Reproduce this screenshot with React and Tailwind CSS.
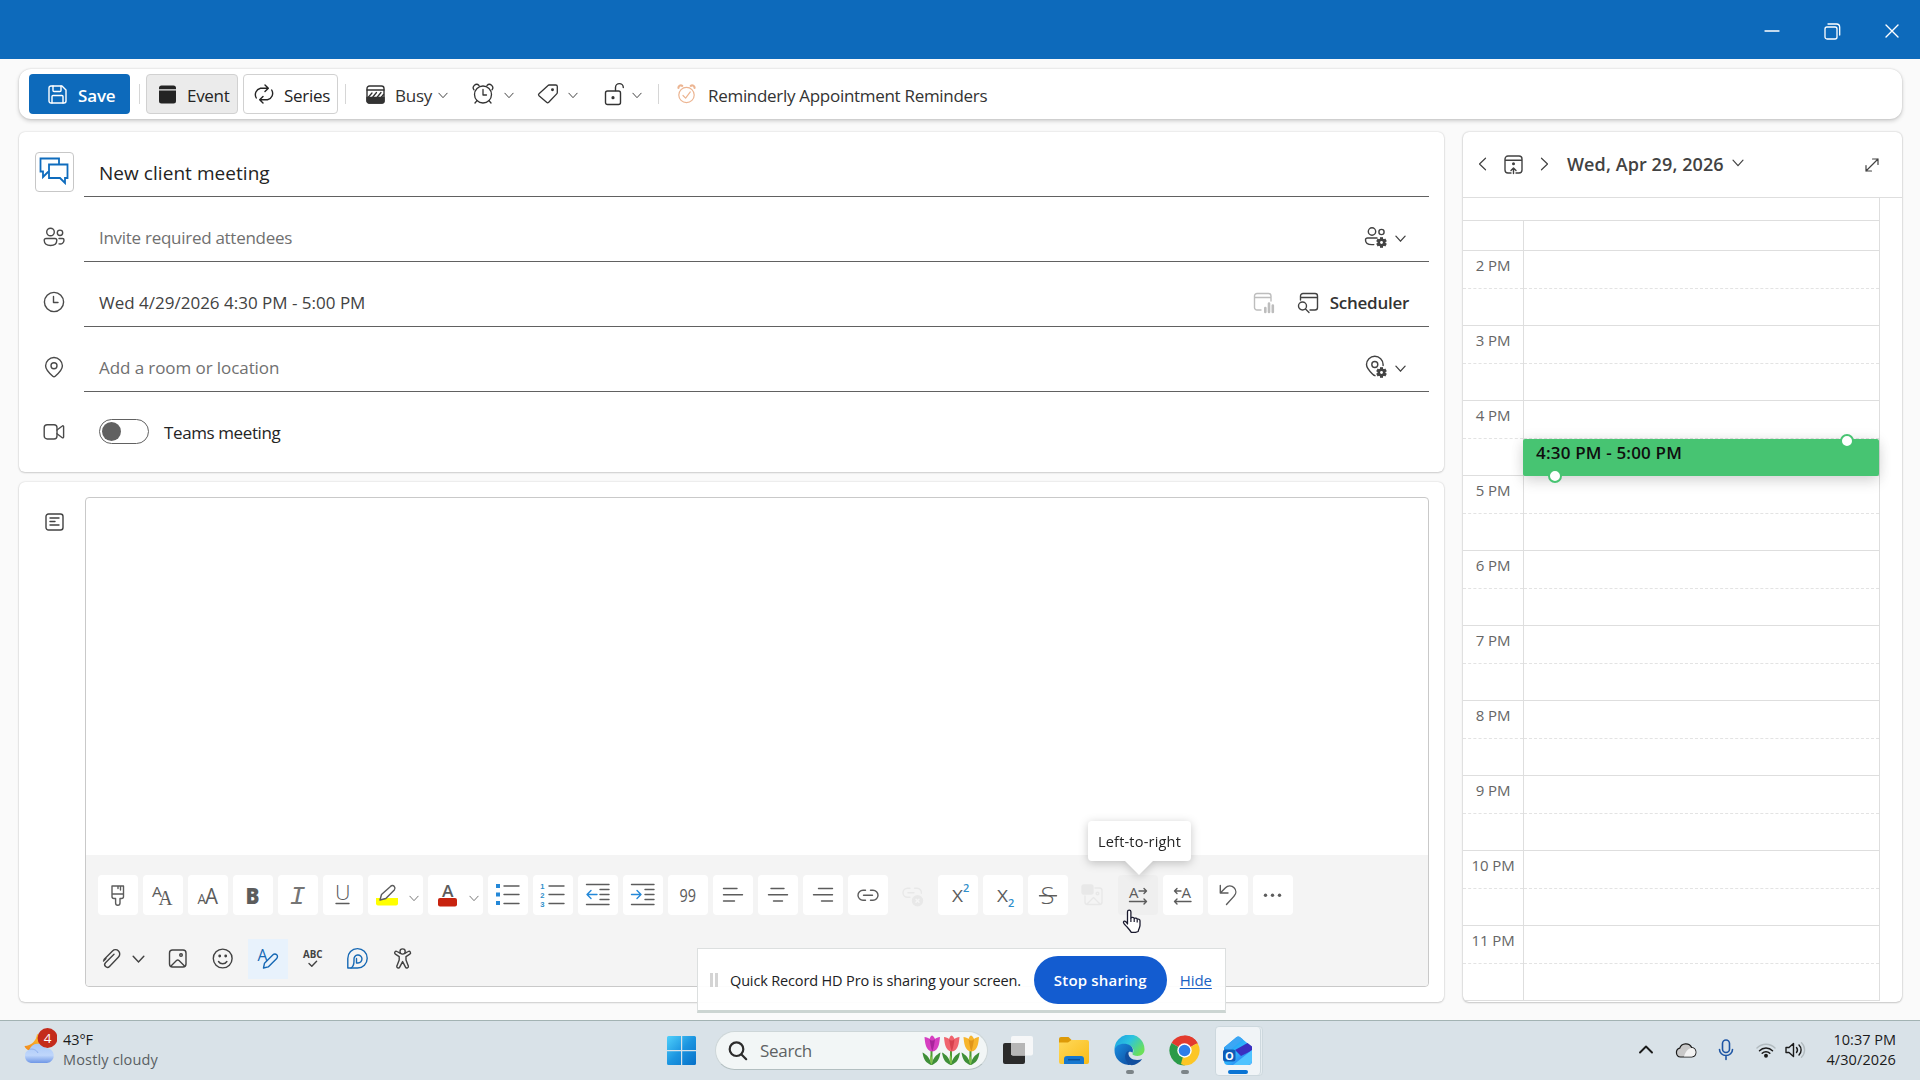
import React, { useState } from 'react';
import clsx from 'clsx';

const Svg = ({ w = 40, h = 40, sw = 1.4, className, children }) => (
  <svg width={w} height={h} viewBox={`0 0 ${w} ${h}`} fill="none" stroke="currentColor" strokeWidth={sw} strokeLinecap="round" strokeLinejoin="round" className={clsx('shrink-0', className)}>
    {children}
  </svg>
);

const Letter = ({ x, y, size, len, weight = 400, family = 'Open Sans, sans-serif', fill = 'currentColor', italic, children }) => (
  <text x={x} y={y} fontSize={size} textLength={len} lengthAdjust="spacingAndGlyphs" fontWeight={weight} fontFamily={family} fontStyle={italic ? 'italic' : 'normal'} fill={fill} stroke="none">
    {children}
  </text>
);

const Chevron = ({ w = 10, sw = 1.4, className }) => (
  <svg width={w} height={w / 2 + 2} viewBox="0 0 12 8" fill="none" stroke="currentColor" strokeWidth={sw} strokeLinecap="round" className={clsx('shrink-0', className)}>
    <path d="M1 1.2 6 6.6 11 1.2" />
  </svg>
);

const Divider = ({ className }) => <div className={clsx('h-5 w-px bg-[#d6d6d6]', className)} />;

/* ---------- title bar ---------- */

const TitleBar = () => (
  <div className="flex h-[59px] items-center justify-end bg-[#0d6abb] pt-[3px] pr-[21px] text-white">
    <Svg w={16} h={16} sw={1.3}><path d="M1 8h14" /></Svg>
    <Svg w={17} h={17} sw={1.3} className="ml-[44px]">
      <rect x="1" y="4" width="12" height="12" rx="2" />
      <path d="M4 1h8.5a3.2 3.2 0 0 1 3.200 3.200V12" />
    </Svg>
    <Svg w={14} h={14} sw={1.4} className="ml-[44px]"><path d="m1 1 12 12M13 1 1 13" /></Svg>
  </div>
);

/* ---------- command bar ---------- */

const CommandBar = ({ mode, setMode }) => (
  <div className="mx-[19px] mt-[10px] flex h-[50px] w-[1883px] items-center rounded-xl bg-white pl-[10px] text-[17px] text-[#333] shadow-[0_0_2px_rgba(0,0,0,0.16),0_2px_4px_rgba(0,0,0,0.18)]">
    <button className="flex h-10 w-[101px] items-center rounded bg-[#0d6abb] pl-[19px] font-semibold tracking-[-0.15px] text-white">
      <Svg w={19} h={19}>
        <path d="M3 1h11l4 4v11a2 2 0 0 1-2 2H3a2 2 0 0 1-2-2V3a2 2 0 0 1 2-2Z" />
        <path d="M5 1v4.500a1 1 0 0 0 1 1h6a1 1 0 0 0 1-1V1M4 18v-6.500a1 1 0 0 1 1-1h9a1 1 0 0 1 1 1V18" />
      </Svg>
      <span className="ml-[11px] pt-[3px]">Save</span>
    </button>
    <Divider className="ml-[9px]" />
    <button onClick={() => setMode('event')} className={clsx('ml-[6px] flex h-10 w-[92px] items-center rounded border border-[#d1d1d1] pl-[11px] tracking-[-0.3px] text-[#242424]', mode === 'event' && 'bg-[#ebebeb]')}>
      <Svg w={19} h={19}>
        <path d="M1 4.200V3a2.500 2.500 0 0 1 2.500-2.500h12A2.500 2.500 0 0 1 18 3v1.200ZM1 5.500h17V16a2.500 2.500 0 0 1-2.500 2.500h-12A2.500 2.500 0 0 1 1 16Z" fill="#242424" stroke="none" />
      </Svg>
      <span className="ml-[10px] pt-[3px]">Event</span>
    </button>
    <button onClick={() => setMode('series')} className={clsx('ml-[5px] flex h-10 w-[95px] items-center rounded border border-[#d1d1d1] pl-[9px] tracking-[-0.3px] text-[#242424]', mode === 'series' && 'bg-[#ebebeb]')}>
      <Svg w={22} h={20}>
        <path d="M3.300 14A6.500 6.500 0 0 1 7.500 4.300H15M12 1l3.300 3.300L12 7.600M18.700 6a6.500 6.500 0 0 1-4.200 9.700H7M10 12.400l-3.300 3.300L10 19" />
      </Svg>
      <span className="ml-[9px] pt-[3px]">Series</span>
    </button>
    <Divider className="ml-[7px]" />
    <Svg w={19} h={19} className="ml-[20px]">
      <rect x="1" y="1" width="17" height="17" rx="2.500" />
      <path d="M1 5h17" />
      <path d="M1 12.500h17v3.500a2 2 0 0 1-2 2H3a2 2 0 0 1-2-2Z" fill="currentColor" />
      <path d="m2.500 12 3.500-4M6.800 12l3.700-4.500M11.300 12 15 7.500M15.500 12l2-2.500" strokeWidth="1.300" />
    </Svg>
    <span className="ml-[10px] w-[44px] pt-[3px] tracking-[-0.26px]">Busy</span>
    <Chevron sw={1.1} className="mt-[3px] ml-[-1px]" />
    <Svg w={22} h={22} sw={1.3} className="ml-[24px]">
      <circle cx="11" cy="11.500" r="8.500" />
      <path d="M11 6.500v5.500h3.500M4.800 17.800 3 20M17.200 17.800 19 20M2 6.800A3.300 3.300 0 0 1 7 2.500M20 6.800a3.300 3.300 0 0 0-5-4.300" />
    </Svg>
    <Chevron sw={1.1} className="mt-[3px] ml-[10px]" />
    <Svg w={22} h={22} sw={1.3} className="ml-[23px]">
      <path d="M12.500 2h6.300a1.500 1.500 0 0 1 1.500 1.500v6a2 2 0 0 1-.6 1.400l-8 8.400a1.500 1.500 0 0 1-2.100 0L2 12.800a1.500 1.500 0 0 1 0-2.100l8.800-8a2 2 0 0 1 1.700-.7Z" />
      <circle cx="15.500" cy="6.700" r=".8" fill="currentColor" />
    </Svg>
    <Chevron sw={1.1} className="mt-[3px] ml-[9px]" />
    <Svg w={20} h={24} sw={1.4} className="ml-[26px]">
      <rect x="1.500" y="9" width="15" height="13.500" rx="2" />
      <path d="M11.500 8.500V5.500a3.900 3.900 0 0 1 7.800 0" />
      <circle cx="9" cy="15.700" r=".9" fill="currentColor" />
    </Svg>
    <Chevron sw={1.1} className="mt-[3px] ml-[8px]" />
    <Divider className="ml-[16px]" />
    <Svg w={19} h={20} sw={1.2} className="ml-[18px] text-[#ecb592]">
      <circle cx="9.500" cy="11" r="7.700" />
      <path d="m6 11.500 2.600 2.600 4.700-6.200" />
      <path d="M1.500 3.800A2.300 2.300 0 0 1 5.200 1.800M17.500 3.800a2.300 2.300 0 0 0-3.700-2" strokeWidth="2.2" />
    </Svg>
    <span className="ml-[12px] pt-[3px] tracking-[-0.3px]">Reminderly Appointment Reminders</span>
  </div>
);

/* ---------- event form ---------- */

const Gear = ({ x, y }) => (
  <g transform={`translate(${x} ${y})`} stroke="none" fill="currentColor">
    <circle r="3.900" />
    <path d="M-1.500-5.300h3v10.600h-3Z" />
    <path d="M-1.500-5.300h3v10.600h-3Z" transform="rotate(60)" />
    <path d="M-1.500-5.300h3v10.600h-3Z" transform="rotate(120)" />
    <circle r="1.400" fill="#fff" />
  </g>
);

const FormRow = ({ icon, children }) => (
  <div className="flex h-[65px]">
    <div className="flex w-[65px] items-center justify-center pt-[14px] pl-[5px] text-[#4a4a4a]">{icon}</div>
    <div className="flex w-[1345px] items-center border-b border-[#616161] pt-[18px] pl-[15px]">{children}</div>
  </div>
);

const EventForm = () => {
  const [online, setOnline] = useState(false);
  return (
    <div className="h-[340px] rounded-md bg-white text-[17px] text-[#424242] shadow-[0_0_2px_rgba(0,0,0,0.18),0_1px_2px_rgba(0,0,0,0.14)]">
      <FormRow
        icon={
          <div className="flex h-10 w-[39px] shrink-0 items-center justify-center rounded border border-[#c7c7c7] text-[#0f6cbd]">
            <Svg w={30} h={28} sw={1.8} className="-mt-0.5">
              <path d="M20 6.500V1.500H1.500v13H4v5.500l5-5" strokeLinejoin="miter" />
              <path d="M10 7.500h18.500v13.500H26v5L21 21H10Z" strokeLinejoin="miter" />
            </Svg>
          </div>
        }
      >
        <span className="text-[19px] tracking-[0.05px] text-[#242424]">New client meeting</span>
      </FormRow>
      <FormRow
        icon={
          <Svg w={22} h={20}>
            <circle cx="7.500" cy="5" r="3.800" />
            <circle cx="17" cy="5.800" r="2.700" />
            <path d="M3 11.500h9a1.800 1.800 0 0 1 1.800 1.800c0 3.500-2.600 5.200-6.300 5.200s-6.300-1.700-6.300-5.200A1.800 1.800 0 0 1 3 11.500ZM16 11.500h3.500a1.500 1.500 0 0 1 1.500 1.500c0 3-2 4.300-5 3.900" />
          </Svg>
        }
      >
        <span className="tracking-[-0.28px] text-[#707070]">Invite required attendees</span>
        <Svg w={24} h={24} className="-mt-[3px] ml-auto">
          <circle cx="8" cy="6.500" r="3.700" />
          <circle cx="17.500" cy="7" r="2.600" />
          <path d="M13 13H3.500a2 2 0 0 0-2 2c0 3 2.400 4.600 6.300 4.600h2" />
          <Gear x={17.5} y={17.5} />
        </Svg>
        <Chevron w={11} className="mt-[1px] mr-[23px] ml-[7px]" />
      </FormRow>
      <FormRow icon={<Svg w={22} h={22}><circle cx="11" cy="11" r="9.600" /><path d="M10.500 5.500v6H15" /></Svg>}>
        <span>Wed 4/29/2026 4:30 PM - 5:00 PM</span>
        <Svg w={22} h={22} className="ml-auto text-[#bdbdbd]">
          <path d="M8 18H4a2.500 2.500 0 0 1-2.500-2.500V4A2.500 2.500 0 0 1 4 1.500h11.500A2.500 2.500 0 0 1 18 4v5M1.500 5.500H18" />
          <path d="M12.300 16v4M16 11.500V20M19.800 13.500V20" strokeWidth="2.600" />
        </Svg>
        <Svg w={22} h={22} className="ml-[22px]">
          <path d="M3.500 8V4A2.500 2.500 0 0 1 6 1.500h12A2.500 2.500 0 0 1 20.500 4v11.500A2.500 2.500 0 0 1 18 18h-5M3.500 5.500h17" />
          <circle cx="5.500" cy="14" r="4" />
          <path d="m8.500 17 3.500 3.500" />
        </Svg>
        <span className="mr-[20px] ml-[11px] font-semibold tracking-[-0.27px] text-[#333]">Scheduler</span>
      </FormRow>
      <FormRow
        icon={
          <Svg w={20} h={22}>
            <path d="M10 1.500a8.400 8.400 0 0 1 8.400 8.200c0 4-3.400 7.200-7.200 10.500a1.800 1.800 0 0 1-2.400 0C5 16.900 1.600 13.700 1.600 9.700A8.400 8.400 0 0 1 10 1.500Z" />
            <circle cx="10" cy="9.700" r="3" />
          </Svg>
        }
      >
        <span className="tracking-[-0.08px] text-[#707070]">Add a room or location</span>
        <Svg w={24} h={24} className="-mt-[3px] ml-auto">
          <path d="M11 20.700 9.500 20C6 16.500 2.500 13.500 2.500 9.500a8.300 8.300 0 0 1 16.600 0v1" />
          <circle cx="10.800" cy="9.500" r="3" />
          <Gear x={17.5} y={17.5} />
        </Svg>
        <Chevron w={11} className="mt-[1px] mr-[23px] ml-[7px]" />
      </FormRow>
      <div className="flex h-[79px] items-center">
        <Svg w={22} h={18} className="ml-[24px] text-[#4a4a4a]">
          <rect x="1.200" y="1.700" width="12.800" height="14.300" rx="3" />
          <path d="m14 7 5.300-4a.8.8 0 0 1 1.300.6v10.500a.8.8 0 0 1-1.300.6L14 10.700" />
        </Svg>
        <button onClick={() => setOnline(!online)} className={clsx('ml-[34px] flex h-[25px] w-[50px] items-center rounded-full border border-[#616161] px-[2px]', online && 'justify-end')}>
          <span className="h-[19px] w-[19px] rounded-full bg-[#616161]" />
        </button>
        <span className="ml-[15px] pt-[2px] tracking-[-0.39px] text-[#242424]">Teams meeting</span>
      </div>
    </div>
  );
};

/* ---------- editor ---------- */

const Numeral = ({ y, children }) => (
  <Letter x={7.2} y={y} size={7.6} weight={700} family="Liberation Sans, sans-serif" fill="#2f8fcb">{children}</Letter>
);

const formatTools = [
  { id: 'painter', icon: <path d="M14 11h11.500v10.500a2 2 0 0 1-2 2H22V28a2.200 2.200 0 0 1-4.400 0v-4.500H16a2 2 0 0 1-2-2ZM14 19h11.500M20 11v2.500M22.500 11v4" /> },
  { id: 'font', icon: <><Letter x={9} y={21.500} size={15} len={10}>A</Letter><Letter x={15.500} y={30} size={22} len={14} family="Liberation Serif, serif">A</Letter></> },
  { id: 'size', icon: <><Letter x={9.500} y={28.500} size={14} len={8.500}>A</Letter><Letter x={17} y={28.500} size={21.500} len={13}>A</Letter></> },
  { id: 'bold', icon: <Letter x={12.500} y={28.500} size={23.500} len={14} weight={800}>B</Letter> },
  { id: 'italic', icon: <Letter x={11.500} y={28.500} size={25} len={16} family="Liberation Mono, monospace" fill="#757575" italic>I</Letter> },
  { id: 'underline', icon: <><Letter x={12} y={25} size={19.500} len={15.500} weight={300}>U</Letter><path d="M13 28.500h13" /></> },
  {
    id: 'highlight', wide: true,
    icon: <><path d="M8 23h22v5.500a2 2 0 0 1-2 2H10a2 2 0 0 1-2-2Z" fill="#ff0" stroke="none" /><path d="m12 25 1.500-5.500 9-8a2.400 2.400 0 0 1 3.800 0c1 1.200.8 2.500 0 3.500l-8.500 8.500Z" fill="#fff" /></>,
  },
  {
    id: 'color', wide: true,
    icon: <><Letter x={14} y={22} size={17} len={11.500} weight={600}>A</Letter><rect x="10" y="23" width="19" height="8.500" rx="2" fill="#c8230f" stroke="none" /></>,
  },
  {
    id: 'bullets',
    icon: <><path d="M8 9h4v4H8ZM8 17.500h4v4H8ZM8 26h4v4H8Z" fill="#2488d8" stroke="none" /><path d="M16 11h15M16 19.500h15M16 28.500h15" /></>,
  },
  {
    id: 'numbers',
    icon: <><Numeral y={13.5}>1</Numeral><Numeral y={22.7}>2</Numeral><Numeral y={31.9}>3</Numeral><path d="M16 11h15M16 19.500h15M16 28.500h15" /></>,
  },
  { id: 'outdent', icon: <><path d="M8.500 9.500H31M22 14.500h9M22 19.500h9M22 24.500h9M8.500 29.500H31" /><path d="M19 19.500H9M13 15.500l-4 4 4 4" stroke="#2488d8" /></> },
  { id: 'indent', icon: <><path d="M8.500 9.500H31M22 14.500h9M22 19.500h9M22 24.500h9M8.500 29.500H31" /><path d="M8.500 19.500H18M14 15.500l4 4-4 4" stroke="#2488d8" /></> },
  { id: 'quote', icon: <Letter x={11.500} y={26.500} size={19} len={16.500}>99</Letter> },
  { id: 'left', icon: <path d="M10.500 13.500H24M10.500 19.700h19M10.500 26h11" /> },
  { id: 'center', icon: <path d="M13 13.500h13M10.500 19.700h19M15.500 26h9" /> },
  { id: 'right', icon: <path d="M15.500 13.500h14M10.500 19.700h19M18.500 26h11" /> },
  { id: 'link', icon: <path d="M17.500 15.200H15a5 5 0 0 0 0 10h2.500M22.500 15.200H25a5 5 0 0 1 0 10h-2.500M15.500 20.200h9" /> },
  { id: 'unlink', disabled: true, icon: <><path d="M17 13.200h-2.500a4.500 4.500 0 0 0 0 9H17M21.500 13.200H24a4.500 4.500 0 0 1 4.400 5M15 17.800h6" /><circle cx="24.500" cy="25.800" r="5" fill="currentColor" /><path d="m23 24.300 3 3m0-3-3 3" stroke="#f4f4f4" /></> },
  { id: 'super', icon: <><Letter x={14} y={27} size={17} len={11}>X</Letter><Letter x={25} y={16.500} size={11} weight={600} fill="#2f8fcb">2</Letter></> },
  { id: 'sub', icon: <><Letter x={14} y={27} size={17} len={11}>X</Letter><Letter x={25} y={32} size={11} weight={600} fill="#2f8fcb">2</Letter></> },
  { id: 'strike', icon: <><Letter x={12.500} y={28.500} size={23.500} len={14} weight={300}>S</Letter><path d="M11.500 20.700h17" /></> },
  { id: 'nopic', disabled: true, icon: <><rect x="9" y="10" width="11" height="9" rx="2" fill="currentColor" /><path d="M12 21v6a2.500 2.500 0 0 0 2.500 2.500h12A2.500 2.500 0 0 0 29 27V15.500A2.500 2.500 0 0 0 26.500 13H22M14 29l6.500-6.500L27 29" /><circle cx="24.500" cy="18.500" r="1.300" /></> },
  { id: 'ltr', hover: true, icon: <><Letter x={11} y={22.500} size={14.500} len={9.500}>A</Letter><path d="M21 16h7.500M26 13.500l2.500 2.500-2.500 2.500M11.500 26.500h17M26 24l2.500 2.500L26 29" /></> },
  { id: 'rtl', icon: <><Letter x={18.500} y={22.500} size={14.500} len={9.500}>A</Letter><path d="M11.500 16H18M14 13.500 11.500 16l2.500 2.500M11.500 26.500h16.500M14 24l-2.500 2.500L14 29" /></> },
  { id: 'undo', icon: <path d="M12.300 10.500V18H20M12.300 18l5.200-5.200a5.800 5.800 0 0 1 8.600 0c2.400 2.500 2.200 6 0 8.300L18.500 29.500" /> },
  { id: 'more', icon: <g fill="currentColor" stroke="none"><circle cx="12.500" cy="20.300" r="1.700" /><circle cx="19.500" cy="20.300" r="1.700" /><circle cx="26.500" cy="20.300" r="1.700" /></g> },
];

const insertTools = [
  { id: 'picture', icon: <><rect x="11.500" y="11" width="16.500" height="17" rx="3" /><circle cx="23" cy="16" r="1.300" /><path d="m13 27 5.500-5.500a1.800 1.800 0 0 1 2.500 0l5.500 5.500" /></> },
  { id: 'emoji', icon: <><circle cx="19.700" cy="19.500" r="9.400" /><path d="M15.500 22.500a5 5 0 0 0 8.400 0" /><circle cx="16.700" cy="17" r=".7" fill="currentColor" /><circle cx="22.700" cy="17" r=".7" fill="currentColor" /></> },
  { id: 'format', active: true, icon: <><Letter x={9.500} y={21.500} size={16} len={10}>A</Letter><path d="m15.500 29 1-4.800 8.500-8.500a2.500 2.500 0 0 1 3.700 3.700l-8.500 8.500Z" /></> },
  { id: 'spelling', icon: <><Letter x={10} y={18.500} size={10.500} len={19.500} weight={700}>ABC</Letter><path d="m16 24.500 2.800 2.700 4.800-5" /></> },
  { id: 'loop', blue: true, icon: <><path d="M9.800 29V19.500a9.700 9.700 0 1 1 9.700 9.500Z" /><path d="M13 29c2.500-1.500 3-4 3-7v-1.500a4 4 0 1 1 4 3.500h-1.500v-4.500" /></> },
  { id: 'access', icon: <><circle cx="19.600" cy="12.500" r="2.600" /><path d="M17 14.200 14 12.500a1.500 1.500 0 0 0-1.600 2.600l3.800 2.500v3.300l-2.300 6a1.500 1.500 0 0 0 2.800 1.200l2.900-5.500 2.900 5.500a1.500 1.500 0 0 0 2.800-1.200l-2.300-6v-3.300l3.800-2.500a1.500 1.500 0 0 0-1.600-2.600l-3 1.700" /></> },
];

const Tooltip = () => (
  <div className="absolute -top-[54px] -left-[30px] z-10 flex h-10 w-[103px] justify-center rounded bg-white pt-[11px] text-[14.5px] leading-5 tracking-[0.2px] whitespace-nowrap text-[#242424] drop-shadow-[0_2px_5px_rgba(0,0,0,0.22)]">
    Left-to-right
    <svg width="28" height="14" viewBox="0 0 28 14" className="absolute top-[40px] left-[37px]"><path d="M0 0h28L14 14Z" fill="#fff" /></svg>
  </div>
);

const Editor = () => (
  <div className="mt-[10px] flex h-[520px] rounded-md bg-white shadow-[0_0_2px_rgba(0,0,0,0.18),0_1px_2px_rgba(0,0,0,0.14)]">
    <div className="w-[66px] pt-[31px] pl-[25.5px] text-[#424242]">
      <Svg w={19} h={18}>
        <rect x="1" y="1" width="17" height="16" rx="2.500" />
        <path d="M5 5h9M5 8.500h5M5 12h9" />
      </Svg>
    </div>
    <div className="mt-[15px] h-[490px] w-[1344px] rounded border border-[#c9c9c9]">
      <div className="h-[357px]" />
      <div className="h-[131px] rounded-b bg-[#f4f4f4] pt-[20px] pl-[12px]">
        <div className="flex gap-[5px]">
          {formatTools.map((t) => (
            <div
              key={t.id}
              className={clsx(
                'relative flex h-10 items-center rounded-sm',
                t.wide ? 'w-[55px]' : 'w-10',
                t.disabled ? 'text-[#e8e8e8]' : 'text-[#5c5c5c]',
                t.hover ? 'bg-[#efefef]' : !t.disabled && 'bg-white'
              )}
            >
              <Svg>{t.icon}</Svg>
              {t.wide && <Chevron w={10} sw={1.2} className="mt-[6px] ml-px text-[#777]" />}
              {t.hover && <Tooltip />}
            </div>
          ))}
        </div>
        <div className="mt-6 flex gap-[5px] text-[#424242]">
          <div className="-ml-[6px] flex w-[61px] items-center">
            <Svg>
              <path d="M12 20.500 20.500 12a4.200 4.200 0 0 1 6 6l-9 9.500a2.700 2.700 0 0 1-4-3.800l8.500-8.500M11.500 22 14 19.500" />
            </Svg>
            <Chevron w={13} className="mt-px" />
          </div>
          {insertTools.map((t) => (
            <div key={t.id} className={clsx('h-10 w-10', t.active && 'bg-[#e8f2fc]', (t.active || t.blue) && 'text-[#1668b4]')}>
              <Svg>{t.icon}</Svg>
            </div>
          ))}
        </div>
      </div>
    </div>
  </div>
);

/* ---------- day view ---------- */

const hours = ['2 PM', '3 PM', '4 PM', '5 PM', '6 PM', '7 PM', '8 PM', '9 PM', '10 PM', '11 PM'];

const DayView = () => (
  <div className="flex h-[870px] w-[439px] flex-col overflow-hidden rounded-md bg-white text-[#424242] shadow-[0_0_2px_rgba(0,0,0,0.25),0_1px_2px_rgba(0,0,0,0.14)]">
    <div className="flex h-[66px] shrink-0 items-center border-b border-[#dedede] pl-[15px]">
      <Svg w={9} h={14} sw={1.2} className="-mt-px"><path d="M7.500 1.200 1.500 7l6 5.800" /></Svg>
      <Svg w={20} h={20} className="ml-[17px]">
        <path d="M7 18H4a3 3 0 0 1-3-3V4a3 3 0 0 1 3-3h11a3 3 0 0 1 3 3v11a3 3 0 0 1-3 3h-3M1 5.200h17M9.500 18.500v-5M7 15.500l2.500-2.500 2.500 2.500" />
        <circle cx="9.500" cy="8.700" r=".8" fill="currentColor" />
      </Svg>
      <Svg w={9} h={14} sw={1.2} className="-mt-px ml-[16px]"><path d="m1.500 1.200 6 5.800-6 5.800" /></Svg>
      <span className="ml-[18px] text-[18px] font-semibold tracking-[0.1px] whitespace-nowrap">Wed, Apr 29, 2026</span>
      <Chevron w={12} sw={1.2} className="-mt-1 ml-[8px]" />
      <Svg w={14} h={14} sw={1.2} className="mr-[23px] ml-auto"><path d="M13 1 1 13M7.500 1H13v5.500M1 7.500V13h5.500" /></Svg>
    </div>
    <div className="h-[22px] w-[417px] shrink-0 border-r border-[#dedede]" />
    <div className="flex h-[30px] w-[417px] shrink-0 border-t border-r border-[#dedede]">
      <div className="w-[60px]" />
      <div className="flex-1 border-l border-[#dedede]" />
    </div>
    {hours.map((h) => (
      <div key={h} className="flex h-[75px] w-[417px] shrink-0">
        <div className="w-[60px]">
          <div className="h-[38px] border-t border-[#dedede] pt-[3px] text-center text-[15px] leading-[22px] tracking-[-0.1px] text-[#666]">{h}</div>
          <div className="h-[37px] border-t border-dashed border-[#e3e3e3]" />
        </div>
        <div className="relative flex-1 border-r border-l border-[#dedede]">
          <div className="h-[38px] border-t border-[#dedede]" />
          <div className="h-[37px] border-t border-dashed border-[#e3e3e3]" />
          {h === '4 PM' && (
            <div className="absolute top-[38.5px] right-0 -left-px z-10 h-[37px] rounded-xs bg-[#47c472] pl-[13px] text-[17px] leading-7 font-semibold tracking-[0.18px] text-[#0f0f0f] shadow-[0_6px_14px_rgba(0,0,0,0.12),0_0_14px_rgba(0,0,0,0.08)]">
              4:30 PM - 5:00 PM
              <span className="absolute -top-[5px] right-[25px] h-[14px] w-[14px] rounded-full border-2 border-[#47c472] bg-white" />
              <span className="absolute -bottom-[7px] left-[25px] h-[14px] w-[14px] rounded-full border-2 border-[#47c472] bg-white" />
            </div>
          )}
        </div>
      </div>
    ))}
    <div className="h-[2px] w-[417px] border-t border-[#dedede]" />
  </div>
);

/* ---------- screen sharing bar and pointer ---------- */

const ShareBar = () => (
  <div className="absolute top-[948px] left-[697px] flex h-[65px] w-[529px] items-center border border-b-[3px] border-[#dcdfdf] border-b-[#ccd5d2] bg-white/95 pt-px text-[#202124]">
    <div className="ml-[12px] h-[14px] w-[3px] bg-[#d4d4d4]" />
    <div className="ml-[2px] h-[14px] w-[3px] bg-[#d4d4d4]" />
    <span className="ml-[12px] pt-px text-[14.5px] tracking-[-0.15px] whitespace-nowrap">Quick Record HD Pro is sharing your screen.</span>
    <button className="ml-[13px] h-12 w-[133px] shrink-0 rounded-full bg-[#135cd0] pt-px text-[15px] font-semibold tracking-[0.2px] text-white">Stop sharing</button>
    <a className="ml-[13px] text-[15px] tracking-[-0.1px] text-[#1a62c4] underline underline-offset-2">Hide</a>
  </div>
);

const Pointer = () => (
  <svg width="20" height="25" viewBox="0 0 20 25" className="absolute top-[909px] left-[1122px] z-20">
    <path d="M5.500 15V2.800a1.700 1.700 0 0 1 3.400 0V9c.5-1 3.100-.9 3.300.5.700-.8 2.800-.5 3 .8.900-.6 2.800-.1 2.800 1.500v4.500c0 2.500-1.500 3.500-1.800 6.200l-2.700.9H9.300c-1.500-2.500-3-4-4.800-6-1.200-1.300-3.500-3.200-3-4.500.6-1.600 2.700-.5 4 2.100Z" fill="#fff" stroke="#1a1a2e" strokeWidth="1.300" strokeLinejoin="round" />
    <path d="M8.900 9v4M12.200 10v3M15.200 11v2.500" stroke="#1a1a2e" strokeWidth="1.200" />
  </svg>
);

/* ---------- taskbar ---------- */

const Weather = () => (
  <svg width="34" height="37" viewBox="0 0 34 37" className="shrink-0">
    <defs>
      <linearGradient id="cloud" x1="0" y1="0" x2="0" y2="1"><stop offset="0" stopColor="#a9c8f7" /><stop offset=".6" stopColor="#bfd6fb" /><stop offset="1" stopColor="#6f97e6" /></linearGradient>
      <linearGradient id="moon" x1="1" y1="0" x2="0" y2="1"><stop offset="0" stopColor="#ffc531" /><stop offset="1" stopColor="#f0861a" /></linearGradient>
    </defs>
    <path d="M14 7a13 13 0 0 1-12.500 12c1 3 4.500 5.500 9 5a11 11 0 0 0 9-9C19 11 17 8.500 14 7Z" fill="url(#moon)" />
    <path d="M8 36a7 7 0 0 1-1.500-13.500 9 9 0 0 1 16-1.500A7.500 7.500 0 1 1 24 36Z" fill="url(#cloud)" />
    <path d="M6.500 22.500c3-1.200 7 .2 8.500 3.500" stroke="#8fb0ee" fill="none" />
    <circle cx="24.500" cy="11" r="10" fill="#c42b1c" />
    <text x="24.500" y="15.800" fontSize="13.500" textAnchor="middle" fontFamily="Open Sans, sans-serif" fill="#fff">4</text>
  </svg>
);

const Tulip = ({ x, petal, dark }) => (
  <g transform={`translate(${x} 0)`}>
    <path d="M9 14v16" stroke="#4f9a32" strokeWidth="2" />
    <path d="M9 30C3 28 1 24 0 17.500c4 2 8 6 9 12.500ZM9 30c6-2 8-6 9-12.500-4 2-8 6-9 12.500Z" fill="#3f8f38" />
    <path d="M9 30c-1.500-3-2-6-1-10 2 3 3 6 1 10Z" fill="#7ec04a" />
    <path d="M2 2c2 0 4 1 5 2 .5-1.500 1-3 2.500-3.500C11 1 12 2.500 12.500 4c1-1 3-2 5-2-.5 5-1 14-7.700 14.500C3 16 2.500 7 2 2Z" fill={petal} />
    <path d="M7 4c1 4 1 8 2.800 12.500C11.500 12 12 8 12.500 4 11 6 8.500 6 7 4Z" fill={dark} />
  </g>
);

const Taskbar = () => (
  <div className="flex h-[60px] items-start border-t border-[#a3b3b3] bg-[#d9e2e8] text-[14.5px] leading-5 text-[#1b1b1b]">
    <div className="flex w-[667px] pt-[6px] pl-[23px]">
      <Weather />
      <div className="mt-[3px] ml-[6px]">
        <div className="tracking-[-0.07px]">43°F</div>
        <div className="tracking-[0.16px] text-[#5a5f63]">Mostly cloudy</div>
      </div>
    </div>

    <svg width="30" height="30" viewBox="0 0 30 30" className="mt-[15px] shrink-0">
      <defs><linearGradient id="win" x1="0" y1="0" x2="1" y2="1"><stop offset="0" stopColor="#4fd0fb" /><stop offset=".5" stopColor="#1c95e0" /><stop offset="1" stopColor="#0670c8" /></linearGradient></defs>
      <path d="M0 1.500A1.500 1.500 0 0 1 1.500 0H14v14H0ZM15.200 0h12.300A1.500 1.500 0 0 1 29 1.500V14H15.200ZM0 15.200h14V29H1.500A1.500 1.500 0 0 1 0 27.500ZM15.200 15.200H29v12.300a1.500 1.500 0 0 1-1.500 1.500H15.200Z" fill="url(#win)" />
    </svg>
    <div className="mt-[10px] ml-[18px] flex h-[39px] w-[273px] items-center rounded-full border border-[#cdd6d8] border-b-[#b3bfc1] bg-[#f2f6f6] pl-[12px]">
      <Svg w={20} h={20} sw={2.2} className="text-[#2c2c2c]"><circle cx="8.500" cy="8.200" r="6.800" /><path d="m13.500 13.500 4.700 4.700" /></Svg>
      <span className="ml-[12px] pt-px text-[17px] tracking-[-0.31px] text-[#5e6263]">Search</span>
      <svg width="60" height="32" viewBox="0 0 60 32" className="mt-px ml-auto mr-[6px]">
        <Tulip x={1.500} petal="#d63fc0" dark="#a9249c" />
        <Tulip x={21} petal="#f0646e" dark="#d8414f" />
        <Tulip x={40.500} petal="#f7b52c" dark="#e0951a" />
      </svg>
    </div>
    <svg width="30" height="30" viewBox="0 0 30 30" className="mt-[15px] ml-[15px] shrink-0">
      <rect x="0" y="7" width="22" height="21" rx="2" fill="#2b2b2b" />
      <rect x="8" y="0" width="22" height="19.500" rx="2" fill="#f6f7f8" />
      <path d="M8 7h14v12.500H10a2 2 0 0 1-2-2Z" fill="#b6b6b6" />
    </svg>
    <svg width="31" height="28" viewBox="0 0 31 28" className="mt-[16px] ml-[26px] shrink-0">
      <defs><linearGradient id="fold" x1="0" y1="0" x2="1" y2="1"><stop offset="0" stopColor="#ffd95a" /><stop offset="1" stopColor="#f9bb18" /></linearGradient></defs>
      <path d="M0 2a2 2 0 0 1 2-2h7.500L13 3.500V7H0Z" fill="#dd9a08" />
      <path d="M0 5.500h9L12.500 3H28a2 2 0 0 1 2 2v20a2 2 0 0 1-2 2H2a2 2 0 0 1-2-2Z" fill="url(#fold)" />
      <path d="M5 27v-5a3 3 0 0 1 3-3h14a3 3 0 0 1 3 3v5Z" fill="#1677cf" />
      <path d="M9 22.700h12" stroke="#0b4f97" strokeWidth="1.500" />
    </svg>
    <div className="mt-[14px] ml-[24px] flex shrink-0 flex-col items-center">
      <svg width="31" height="31" viewBox="0 0 31 31">
        <defs>
          <linearGradient id="edgeTop" x1="0" y1="0" x2="1" y2=".6"><stop offset="0" stopColor="#1b9be2" /><stop offset=".5" stopColor="#2cc3e0" /><stop offset="1" stopColor="#6be05a" /></linearGradient>
          <linearGradient id="edgeLow" x1="0" y1="0" x2="1" y2="1"><stop offset="0" stopColor="#1a8ee0" /><stop offset="1" stopColor="#0d4a9e" /></linearGradient>
        </defs>
        <path d="M.5 15A15 15 0 0 1 30.500 14c.3 4.500-3 7-7 7-3.500 0-5.500-1.200-5-2.300 1.500-2 1.300-5.200-1-7C12 7.500 2 9.500.5 15Z" fill="url(#edgeTop)" />
        <path d="M.5 15C1.500 9 11 7 16.500 10.800c2.500 1.700 3 4.700 2 7-1-1.500-3.500-1.700-5 .2-2.500 3.500 0 8.500 5 10.300-1 1.500-3 2-5 1.500C6 28.800.3 23 .5 15Z" fill="url(#edgeLow)" />
        <path d="M12.300 17.500c-3.300 5 .7 11.700 5.200 12.700 4.500-.2 8.200-2.700 10.700-6.200-3.500 1.500-9 1.500-12-1.500-1.500-1.500-2.500-4-1.200-6.200-1-.1-2 .3-2.700 1.200Z" fill="#114f9f" />
      </svg>
      <span className="mt-[4px] h-1 w-2 rounded-full bg-[#7c8488]" />
    </div>
    <div className="mt-[14px] ml-[24px] flex shrink-0 flex-col items-center">
      <svg width="31" height="31" viewBox="0 0 31 31">
        <path d="M15.500 15.500 2.500 8A15 15 0 0 1 28.500 8Z" fill="#e33b2e" />
        <path d="M15.500 15.500 28.500 8A15 15 0 0 1 15.500 30.500Z" fill="#fcc625" />
        <path d="M15.500 15.500v15A15 15 0 0 1 2.500 8Z" fill="#2a9b48" />
        <path d="M15.500 15.500 21.600 19 15.500 30.500 12 29Z" fill="#fcc625" />
        <path d="M15.500 8.500h13.300A15 15 0 0 0 15.500.5Z" fill="#e33b2e" />
        <circle cx="15.500" cy="15.500" r="7.200" fill="#fff" />
        <circle cx="15.500" cy="15.500" r="5.800" fill="#2f7de9" />
      </svg>
      <span className="mt-[4px] h-1 w-2 rounded-full bg-[#7c8488]" />
    </div>
    <div className="mt-[5px] ml-[15px] w-[48px] shrink-0 rounded border border-[#cdd8de] bg-[#e6edf1]">
      <div className="flex h-[48px] w-[45px] flex-col items-center rounded border-r border-[#cdd8de] bg-[#f0f4f7] pt-[9px]">
        <svg width="30" height="30" viewBox="0 0 30 30">
          <defs><linearGradient id="mail" x1="0" y1="0" x2="1" y2="1"><stop offset="0" stopColor="#1489e8" /><stop offset=".5" stopColor="#2fb4fb" /><stop offset="1" stopColor="#2a54e8" /></linearGradient></defs>
          <path d="M1 11.500 13 1.500a3.500 3.500 0 0 1 4.500 0L29 11v14a4 4 0 0 1-4 4H5a4 4 0 0 1-4-4Z" fill="url(#mail)" />
          <path d="M1 11.500 13 1.500a3.500 3.500 0 0 1 4.500 0L20 3.500 6 15Z" fill="#3ba6f5" />
          <path d="M12 14 24.500 7 29 10.500v4L18 20Z" fill="#3a2fc0" />
          <path d="M29 14v11a4 4 0 0 1-4 4H10Z" fill="#4fc3ff" />
          <rect x="0" y="13.500" width="12.500" height="12" rx="2.500" fill="#0f5cb8" />
          <text x="6.300" y="23.500" fontSize="11" fontWeight="700" textAnchor="middle" fontFamily="Open Sans, sans-serif" fill="#fff">O</text>
        </svg>
        <span className="mt-[4px] h-1 w-5 rounded-full bg-[#0a74d4]" />
      </div>
    </div>

    <div className="ml-auto flex h-full items-center">
      <Svg w={14} h={9} sw={1.9} className="-mt-[2px]"><path d="M1 7.500 7 1.500l6 6" /></Svg>
      <Svg w={22} h={16} sw={1.2} className="-mt-[2px] ml-[22px]">
        <path d="M5.500 15a4.500 4.500 0 0 1-.8-8.800 6.500 6.500 0 0 1 12-.7A4.800 4.800 0 0 1 16.800 15Z" fill="#c9c9c9" />
        <path d="M9 14.500c1.500-5 4-8 8-8.500a4.300 4.300 0 0 1-.2 8.500Z" fill="#f3f3f3" stroke="none" />
      </Svg>
      <Svg w={16} h={22} sw={1.600} className="-mt-[2px] ml-[21px] text-[#1d55a4]">
        <rect x="4.500" y="1" width="7" height="12.500" rx="3.500" />
        <path d="M1.500 10.500a6.500 6 0 0 0 13 0M8 16.700V20.500" />
      </Svg>
      <Svg w={20} h={16} sw={1.500} className="-mt-[2px] ml-[22px]">
        <path d="M1 6a12.500 12.500 0 0 1 18 0" className="text-[#b3bcc0]" stroke="currentColor" />
        <path d="M3.500 8.800a9 9 0 0 1 13 0M6.200 11.300a5.300 5.300 0 0 1 7.600 0" />
        <circle cx="10" cy="13.800" r="1.200" fill="currentColor" />
      </Svg>
      <Svg w={22} h={18} sw={1.400} className="-mt-[2px] ml-[9px]">
        <path d="M1 6.500v5h3l4.500 4V2.500L4 6.500Z" />
        <path d="M11.500 6.500a4 4 0 0 1 0 5M14 4a7 7 0 0 1 0 10" />
        <path d="M16.500 1.800a10 10 0 0 1 0 14.400" className="text-[#b3bcc0]" stroke="currentColor" />
      </Svg>
      <div className="mr-[24px] ml-[19px] w-[70px] pb-[1px] text-right">
        <div>10:37 PM</div>
        <div className="tracking-[0.1px]">4/30/2026</div>
      </div>
    </div>
  </div>
);

const App = () => {
  const [mode, setMode] = useState('event');

  return (
    <div className="relative flex h-[1080px] w-[1920px] flex-col overflow-hidden bg-[#fafafa] font-['Open_Sans',sans-serif]">
      <TitleBar />
      <CommandBar mode={mode} setMode={setMode} />
      <div className="mt-[13px] flex flex-1 gap-[19px] pl-[19px]">
        <div className="w-[1425px]">
          <EventForm />
          <Editor />
        </div>
        <DayView />
      </div>
      <Taskbar />
      <ShareBar />
      <Pointer />
    </div>
  );
};

export default App;
